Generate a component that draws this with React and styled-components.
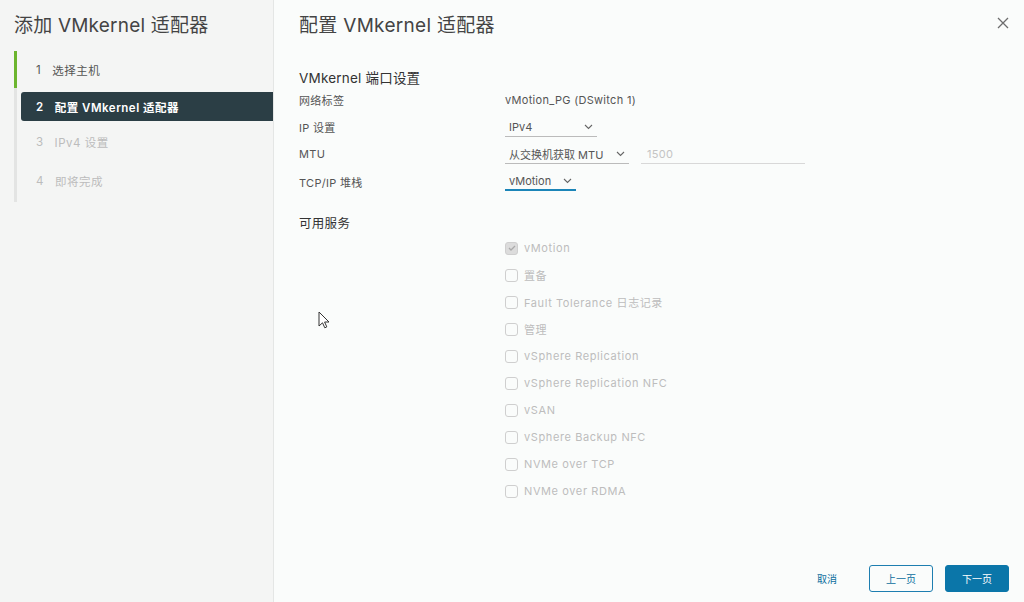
import React from 'react';
import styled, { createGlobalStyle } from 'styled-components';

const Global = createGlobalStyle`
  html, body { margin: 0; padding: 0; }
  body {
    font-family: Inter, "Noto Sans CJK SC", sans-serif;
    background: #fafcfb;
    color: #313131;
  }
`;

const Shell = styled.div`
  display: flex;
  width: 1024px;
  height: 602px;
  position: relative;
  overflow: hidden;
`;

const Side = styled.div`
  width: 273px;
  flex-shrink: 0;
  background: #f4f5f4;
  border-right: 1px solid #e4e6e5;
  display: flex;
  flex-direction: column;
`;

const SideTitle = styled.h2`
  margin: 0;
  padding: 10px 0 0 14px;
  height: 41px;
  font-size: 19px;
  font-weight: 400;
  color: #444;
  letter-spacing: 0.2px;
`;

const Steps = styled.div`
  margin-left: 14px;
  border-left: 3px solid #e3e4e3;
  display: flex;
  flex-direction: column;
  gap: 3px;
  padding-bottom: 3px;
`;

const Step = styled.div`
  height: ${p => (p.$active ? '29px' : p.$short ? '35px' : '37px')};
  margin: ${p => (p.$active ? '1px 0 0 4px' : p.$first ? '0 0 0 -3px' : '0')};
  padding-left: ${p => (p.$active ? '15px' : '19px')};
  border-left: ${p => (p.$first ? '3px solid #6cb52e' : 'none')};
  border-radius: ${p => (p.$active ? '3px 0 0 3px' : '0')};
  background: ${p => (p.$active ? '#2b3e45' : 'transparent')};
  color: ${p => (p.$active ? '#fff' : p.$done ? '#555' : '#bcbcbc')};
  font-weight: ${p => (p.$active ? 600 : 400)};
  font-size: 11.5px;
  letter-spacing: 0.5px;
  display: flex;
  align-items: center;
  gap: 11px;
`;

const Main = styled.div`
  flex: 1;
  display: flex;
  flex-direction: column;
  padding: 0 0 0 25px;
`;

const Header = styled.div`
  display: flex;
  justify-content: space-between;
  align-items: center;
  height: 46px;
  padding-right: 10px;
`;

const Title = styled.h1`
  margin: 0;
  font-size: 19px;
  font-weight: 400;
  color: #444;
  letter-spacing: 0.3px;
`;

const Close = styled.button`
  background: none;
  border: none;
  padding: 4px;
  display: flex;
  color: #777;
`;

const Section = styled.div`
  font-size: 13.5px;
  color: #333;
  margin-top: 21px;
  height: 19px;
  letter-spacing: 0.2px;
`;

const Form = styled.div`
  display: grid;
  grid-template-columns: 206px auto;
  grid-auto-rows: 27.4px;
  align-items: center;
  font-size: 11px;
  letter-spacing: 0.3px;
  color: #555;
`;

const Value = styled.div`
  display: flex;
  align-items: center;
  gap: 12px;
`;

const Select = styled.div`
  width: ${p => p.$w}px;
  height: 19px;
  box-sizing: border-box;
  padding: 0 4px;
  display: flex;
  align-items: center;
  justify-content: space-between;
  border-bottom: ${p => (p.$focus ? '2px solid #1b85b8' : '1px solid #bbb')};
  color: #555;
  letter-spacing: 0;
`;

const Input = styled.div`
  width: 164px;
  height: 19px;
  box-sizing: border-box;
  padding-left: 6px;
  display: flex;
  align-items: center;
  border-bottom: 1px solid #d8d8d8;
  color: #c4c4c4;
`;

const Services = styled.div`
  font-size: 12.5px;
  color: #333;
  margin-top: 17px;
  letter-spacing: 0.3px;
`;

const Checks = styled.div`
  margin: 3px 0 0 206px;
  display: flex;
  flex-direction: column;
`;

const CheckRow = styled.label`
  height: 27px;
  display: flex;
  align-items: center;
  gap: 6px;
  font-size: 11px;
  letter-spacing: 0.6px;
  color: #bdbdbd;
`;

const Box = styled.span`
  width: 13px;
  height: 13px;
  box-sizing: border-box;
  border: 1px solid #cfcfcf;
  border-radius: 3px;
  background: ${p => (p.$checked ? '#dcdcdc' : 'transparent')};
  display: flex;
  align-items: center;
  justify-content: center;
`;

const Footer = styled.div`
  margin-top: auto;
  display: flex;
  justify-content: flex-end;
  align-items: center;
  gap: 12px;
  padding: 0 15px 10px 0;
`;

const Btn = styled.button`
  height: 27px;
  width: ${p => (p.$link ? 'auto' : '64px')};
  padding: ${p => (p.$link ? '0 20px 0 0' : '0')};
  border-radius: 3px;
  font-family: inherit;
  font-size: 10px;
  border: ${p => (p.$primary ? '1px solid #0b76a9' : p.$link ? 'none' : '1px solid #1d7eb0')};
  background: ${p => (p.$primary ? '#0b76a9' : 'transparent')};
  color: ${p => (p.$primary ? '#fff' : '#0b6e9e')};
`;

const Cursor = styled.svg`
  position: absolute;
  left: 318px;
  top: 311px;
`;

const Chevron = () => (
  <svg width="9" height="6" viewBox="0 0 9 6">
    <path d="M1 1l3.5 3.5L8 1" fill="none" stroke="#666" strokeWidth="1.1" />
  </svg>
);

const services = [
  'vMotion', '置备', 'Fault Tolerance 日志记录', '管理', 'vSphere Replication',
  'vSphere Replication NFC', 'vSAN', 'vSphere Backup NFC', 'NVMe over TCP', 'NVMe over RDMA',
];

export default function App() {
  return (
    <Shell>
      <Global />
      <Side>
        <SideTitle>添加 VMkernel 适配器</SideTitle>
        <Steps>
          <Step $first $done><span>1</span><span>选择主机</span></Step>
          <Step $active><span>2</span><span>配置 VMkernel 适配器</span></Step>
          <Step $short><span>3</span><span>IPv4 设置</span></Step>
          <Step><span>4</span><span>即将完成</span></Step>
        </Steps>
      </Side>
      <Main>
        <Header>
          <Title>配置 VMkernel 适配器</Title>
          <Close aria-label="close">
            <svg width="14" height="14" viewBox="0 0 14 14">
              <path d="M2 2l10 10M12 2L2 12" stroke="#6d6d6d" strokeWidth="1.3" />
            </svg>
          </Close>
        </Header>
        <Section>VMkernel 端口设置</Section>
        <Form>
          <span>网络标签</span>
          <Value>vMotion_PG (DSwitch 1)</Value>
          <span>IP 设置</span>
          <Value><Select $w={92}>IPv4<Chevron /></Select></Value>
          <span>MTU</span>
          <Value>
            <Select $w={124}>从交换机获取 MTU<Chevron /></Select>
            <Input>1500</Input>
          </Value>
          <span>TCP/IP 堆栈</span>
          <Value><Select $w={71} $focus>vMotion<Chevron /></Select></Value>
        </Form>
        <Services>可用服务</Services>
        <Checks>
          {services.map((s, i) => (
            <CheckRow key={s}>
              <Box $checked={i === 0}>
                {i === 0 && (
                  <svg width="8" height="6" viewBox="0 0 8 6">
                    <path d="M1 3l2 2 4-4" fill="none" stroke="#aaa" strokeWidth="1.3" />
                  </svg>
                )}
              </Box>
              {s}
            </CheckRow>
          ))}
        </Checks>
        <Footer>
          <Btn $link>取消</Btn>
          <Btn>上一页</Btn>
          <Btn $primary>下一页</Btn>
        </Footer>
      </Main>
      <Cursor width="12" height="18" viewBox="0 0 12 18">
        <path d="M1 1v14l3.5-3.2 2.3 5 2-.9-2.2-4.9H11z" fill="#fff" stroke="#333" strokeWidth="1" />
      </Cursor>
    </Shell>
  );
}
